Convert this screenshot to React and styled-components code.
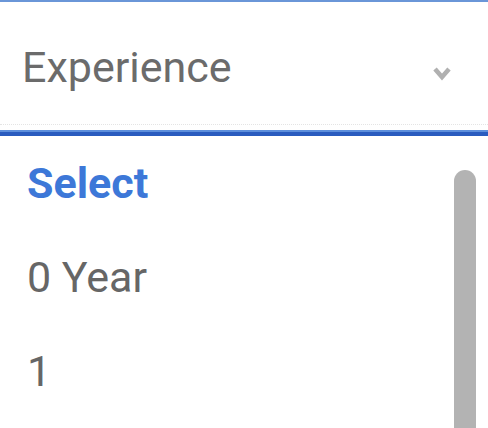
import React from 'react';
import styled, { createGlobalStyle } from 'styled-components';

const GlobalStyle = createGlobalStyle`
  body {
    margin: 0;
    background: #fff;
    font-family: Roboto, "Liberation Sans", sans-serif;
  }
`;

const Page = styled.div`
  width: 488px;
  height: 428px;
  overflow: hidden;
  display: flex;
  flex-direction: column;
`;

const Field = styled.div`
  height: 125px;
  box-sizing: border-box;
  border-top: 2px solid #6a96d8;
  border-bottom: 1px dotted #e4e4e4;
  display: flex;
  align-items: flex-start;
  justify-content: space-between;
  padding: 40px 36px 0 22px;
`;

const FieldLabel = styled.span`
  font-size: 43px;
  line-height: 50px;
  color: #6b6b6b;
`;

const Chevron = styled.svg`
  width: 20px;
  height: 16px;
  margin-top: 23px;
  filter: blur(0.7px);
`;

const Underline = styled.div`
  margin-top: 5px;
  height: 4px;
  border-top: 2px solid #5d8fdc;
  background: #2a5cbf;
`;

const Menu = styled.div`
  flex: 1;
  display: flex;
`;

const Options = styled.ul`
  flex: 1;
  list-style: none;
  margin: 0;
  padding: 0 0 0 27px;
`;

const Option = styled.li`
  font-size: 43px;
  line-height: 94px;
  height: 94px;
  color: ${({ $active }) => ($active ? '#3d78d8' : '#666')};
  font-weight: ${({ $active }) => ($active ? 700 : 400)};
`;

const Track = styled.div`
  width: 22px;
  margin-right: 12px;
  padding-top: 34px;
  display: flex;
`;

const Thumb = styled.div`
  flex: 1;
  background: #b3b3b3;
  border-radius: 11px 11px 0 0;
`;

const options = ['Select', '0 Year', '1'];

export default function App() {
  return (
    <Page>
      <GlobalStyle />
      <Field>
        <FieldLabel>Experience</FieldLabel>
        <Chevron viewBox="0 0 20 16">
          <polyline points="3,4 10,12 17,4" fill="none" stroke="#b0b0b0" strokeWidth="4.5" />
        </Chevron>
      </Field>
      <Underline />
      <Menu>
        <Options>
          {options.map((o, i) => (
            <Option key={o} $active={i === 0}>{o}</Option>
          ))}
        </Options>
        <Track>
          <Thumb />
        </Track>
      </Menu>
    </Page>
  );
}
